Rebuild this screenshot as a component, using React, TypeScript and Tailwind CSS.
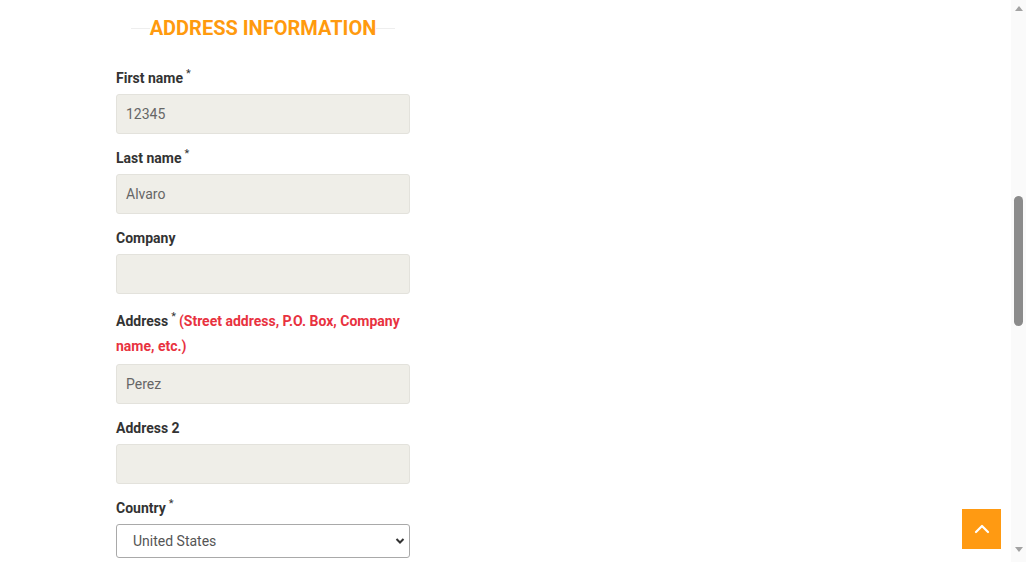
import { ChevronUp } from 'lucide-react';

const font = { fontFamily: 'Roboto, "Liberation Sans", sans-serif' };

function Req() {
  return <sup className="ml-[3px] text-[11px] leading-none font-normal text-[#333] top-[-6px]">*</sup>;
}

function Field({ label, required, value }: { label: string; required?: boolean; value?: string }) {
  return (
    <div className="mb-[12px]">
      <div className="mb-[3px] text-[14px] font-bold leading-[25px] text-[#333]">
        {label}
        {required && <Req />}
      </div>
      <div className="flex h-[40px] items-center rounded-[3px] border border-[#e3e2dc] bg-[#efeee8] px-[9px] text-[14px] text-[#666]">
        {value}
      </div>
    </div>
  );
}

export default function App() {
  return (
    <div className="flex h-[562px] w-[1026px] overflow-hidden bg-white" style={font}>
      <div className="relative flex-1">
        <div className="ml-[116px] w-[294px]">
          <div className="mb-[25px] flex items-center pt-[15px] pl-[15px] pr-[15px]">
            <div className="h-px flex-1 bg-[#eeeeee]" />
            <h2 className="text-[20px] font-bold leading-[26px] text-[#ff9a0e]">ADDRESS INFORMATION</h2>
            <div className="h-px flex-1 bg-[#eeeeee]" />
          </div>
          <Field label="First name" required value="12345" />
          <Field label="Last name" required value="Alvaro" />
          <Field label="Company" />
          <div className="mb-[12px]">
            <div className="pt-[3px] pb-[5px] text-[14px] font-bold leading-[25px] text-[#333]">
              Address
              <Req />
              <span className="ml-[3px] text-[#e8323f]">(Street address, P.O. Box, Company name, etc.)</span>
            </div>
            <div className="flex h-[40px] items-center rounded-[3px] border border-[#e3e2dc] bg-[#efeee8] px-[9px] text-[14px] text-[#666]">
              Perez
            </div>
          </div>
          <Field label="Address 2" />
          <div>
            <div className="mb-[3px] text-[14px] font-bold leading-[25px] text-[#333]">
              Country
              <Req />
            </div>
            <div className="flex h-[34px] items-center justify-between rounded-[3px] border border-[#a9a9a9] bg-white pl-[16px] pr-[4px] text-[14px] text-[#555]">
              <span>United States</span>
              <svg width="10" height="8" viewBox="0 0 10 8">
                <path d="M1.5 2 L5 5.5 L8.5 2" fill="none" stroke="#333" strokeWidth="2" />
              </svg>
            </div>
          </div>
        </div>
        <div className="absolute left-[962px] top-[509px] flex h-[40px] w-[39px] items-center justify-center bg-[#ff9a12]">
          <ChevronUp size={24} color="#fff" strokeWidth={2.25} />
        </div>
      </div>
      <div className="flex w-[15px] flex-col items-center bg-[#fafafa]">
        <div className="mt-[6px] h-0 w-0 border-x-[4px] border-b-[5px] border-x-transparent border-b-[#a3a3a3]" />
        <div className="mt-[185px] h-[130px] w-[9px] rounded-full bg-[#8b8b8b]" />
        <div className="mt-auto mb-[10px] h-0 w-0 border-x-[4px] border-t-[5px] border-x-transparent border-t-[#a3a3a3]" />
      </div>
    </div>
  );
}
